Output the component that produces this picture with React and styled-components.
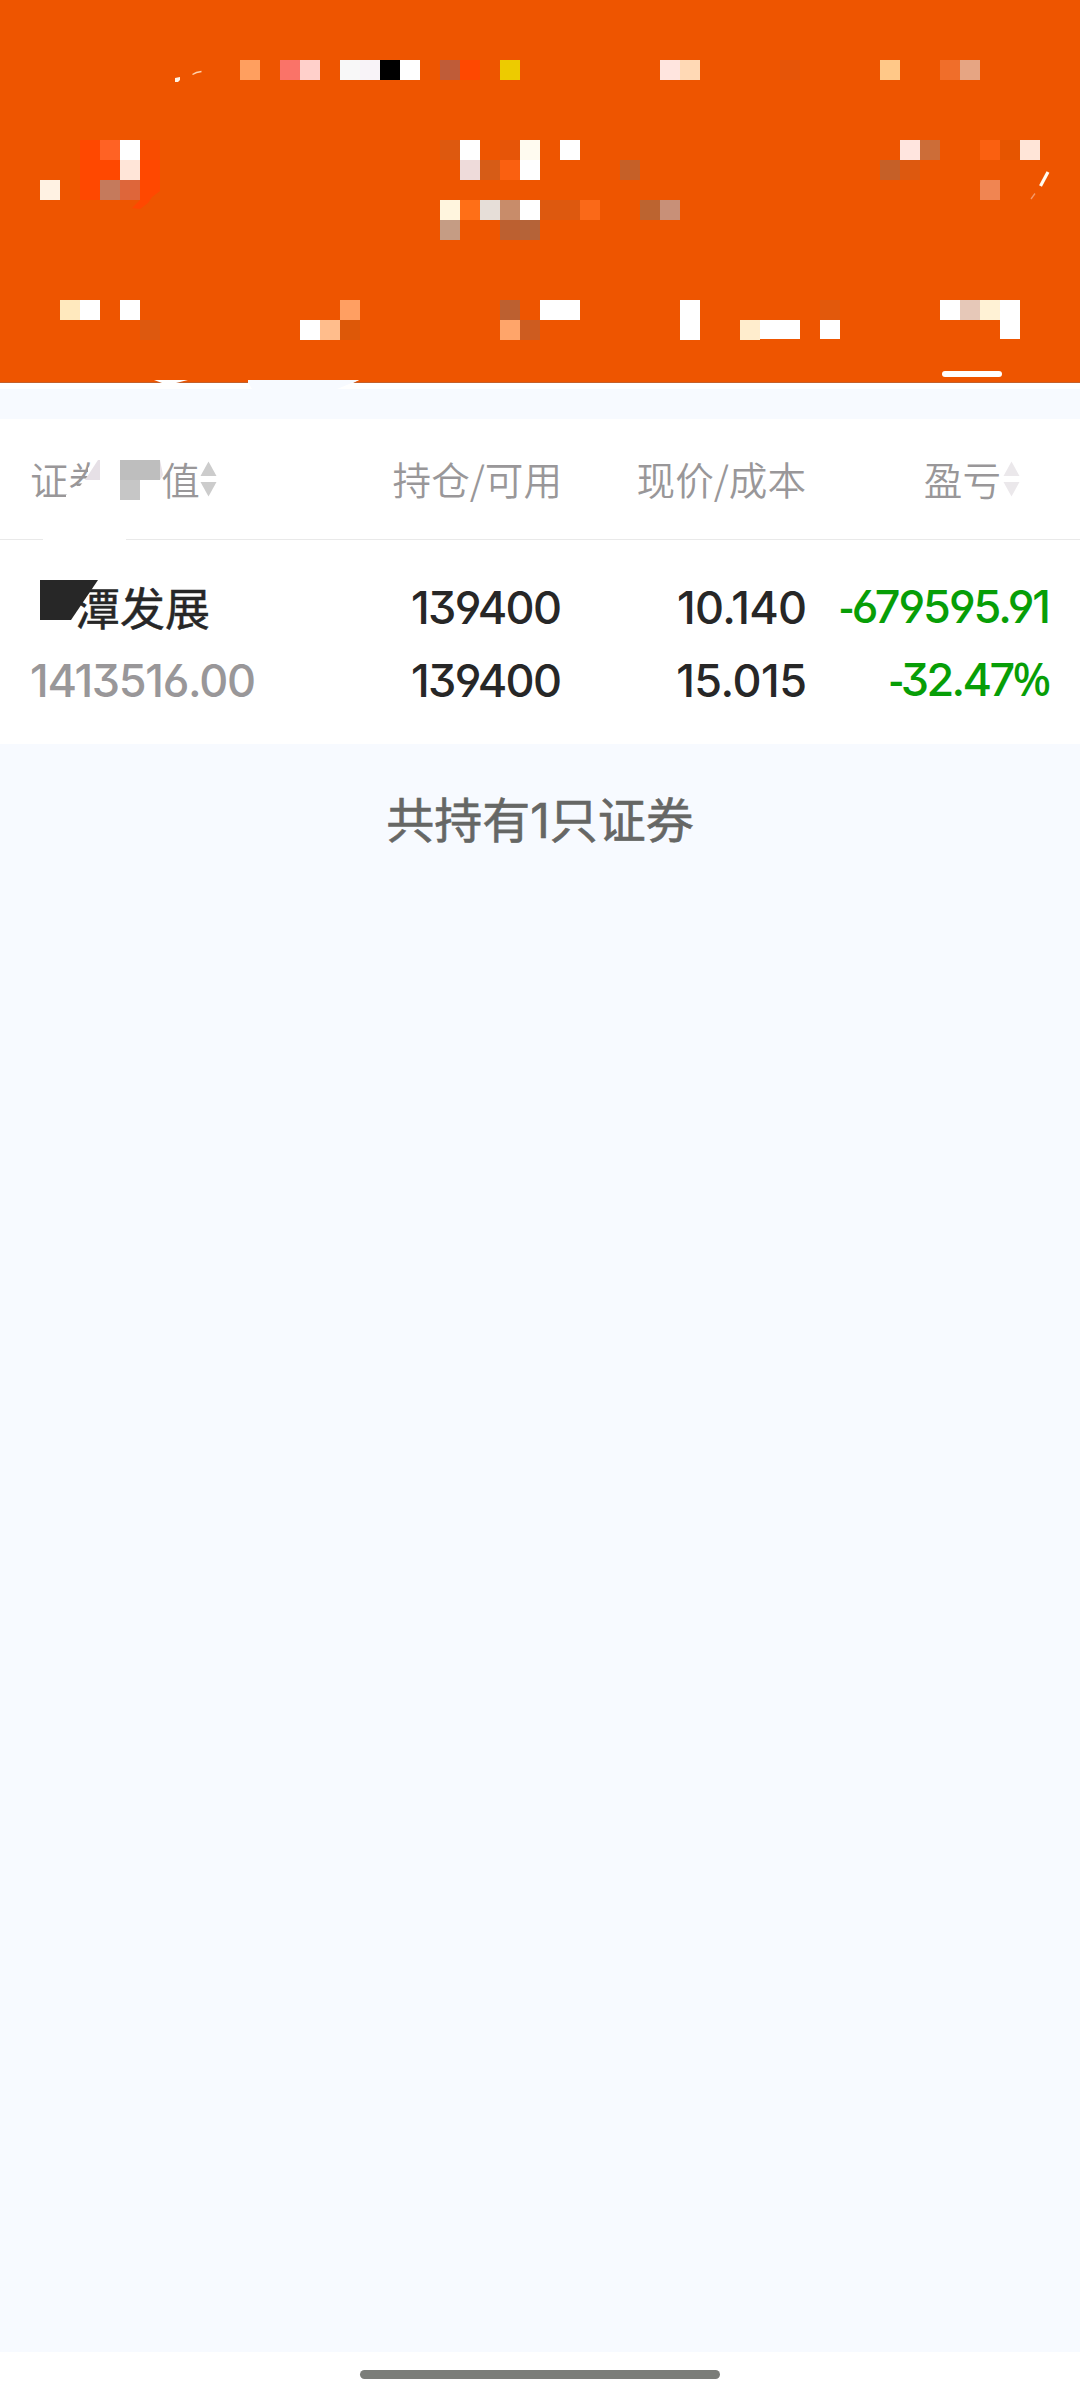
import React from 'react';
import styled, { createGlobalStyle } from 'styled-components';

const GlobalStyle = createGlobalStyle`
  * {
    box-sizing: border-box;
  }
  body {
    margin: 0;
    background-color: #f7faff;
    font-family: Inter, "Noto Sans CJK SC", sans-serif;
  }
`;

const Page = styled.div`
  width: 1080px;
  height: 2400px;
  display: flex;
  flex-direction: column;
  overflow: hidden;
`;

const Header = styled.header`
  height: 389px;
  flex: none;
  background-color: #ffffff;
`;

const HeaderArt = styled.svg`
  display: block;
`;

const Holdings = styled.section`
  margin-top: 30px;
  height: 325px;
  flex: none;
  background-color: #ffffff;
`;

const Row = styled.div`
  display: grid;
  grid-template-columns: 290px 242px 245px 244px;
  padding: 0 29px 0 30px;
`;

const TableHead = styled(Row)`
  position: relative;
  height: 120px;
  align-items: center;
`;

const HeadCell = styled.div`
  display: flex;
  align-items: center;
  justify-content: ${(p) => (p.$left ? 'flex-start' : 'flex-end')};
  padding-right: ${(p) => p.$end || '0'};
  padding-bottom: 3px;
  font-family: "Noto Sans CJK SC", sans-serif;
  font-size: 38.6px;
  font-weight: 350;
  line-height: 60px;
  color: #999799;
  white-space: nowrap;
`;

const CoverGap = styled.span`
  width: 54px;
`;

const Arrows = styled.svg`
  margin-top: 3px;
  margin-left: ${(p) => p.$gap || '0'};
`;

const Divider = styled.div`
  display: flex;
  justify-content: space-between;
  height: 1px;
`;

const Line = styled.span`
  width: ${(p) => p.$width};
  background-color: #e9e9e9;
`;

const TableRow = styled(Row)`
  position: relative;
  padding-top: 31px;
`;

const Cell = styled.div`
  display: flex;
  flex-direction: column;
  align-items: ${(p) => (p.$left ? 'flex-start' : 'flex-end')};
  margin-top: ${(p) => p.$lift || '0'};
`;

const Value = styled.span`
  height: 73px;
  line-height: 73px;
  font-size: 45px;
  font-weight: 450;
  font-feature-settings: "cv03", "cv04", "cv09";
  letter-spacing: -${(p) => p.$tight}px;
  margin-right: ${(p) => p.$tight}px;
  color: ${(p) => p.$color || '#272727'};
  white-space: nowrap;
`;

// narrower minus and percent signs
const Sign = styled.span`
  font-family: "Noto Sans", sans-serif;
  font-weight: 500;
  line-height: 1;
`;

const StockName = styled.span`
  height: 73px;
  line-height: 71px;
  padding-left: 45px;
  font-family: "Noto Sans CJK SC", sans-serif;
  font-size: 45px;
  font-weight: 400;
  -webkit-text-stroke: 0.5px #272727;
  color: #272727;
`;

const Cover = styled.svg`
  position: absolute;
  left: ${(p) => p.$left};
  top: ${(p) => p.$top};
`;

const Summary = styled.p`
  margin: 41px 0 0;
  text-align: center;
  font-size: 48px;
  line-height: 72px;
  font-weight: 400;
  -webkit-text-stroke: 0.6px #666765;
  color: #666765;
`;

const NavBar = styled.footer`
  display: flex;
  justify-content: center;
  height: 48px;
  margin-top: auto;
  padding-top: 18px;
  background-color: #ffffff;
`;

const NavHandle = styled.span`
  width: 360px;
  height: 9px;
  border-radius: 5px;
  background-color: #7b7d79;
`;

// x, y, colour, optional width and height
const blocks = [
  [240, 60, '#ff9f5f'], [280, 60, '#fa7368'], [300, 60, '#ffd0cb'],
  [340, 60, '#f8f8f8'], [360, 60, '#f8f3f8'], [380, 60, '#000000'],
  [400, 60, '#ffffff'], [440, 60, '#bf5c38'], [460, 60, '#ff4800'],
  [500, 60, '#edcb00'], [660, 60, '#ffe5df'], [680, 60, '#ffd9b5'],
  [780, 60, '#e65508'], [880, 60, '#ffc888'], [940, 60, '#f06e2a'],
  [960, 60, '#e6a583'],

  [80, 140, '#ff4800', 20, 60], [100, 140, '#ff6224'], [120, 140, '#ffffff'],
  [140, 140, '#f84c00'], [440, 140, '#dd590f'], [460, 140, '#ffffff'],
  [500, 140, '#e65508'], [520, 140, '#fffbf0'], [560, 140, '#ffffff'],
  [900, 140, '#ffe5df'], [920, 140, '#cc6d38'], [980, 140, '#fa6010'],
  [1000, 140, '#e65500'], [1020, 140, '#ffe5d8'],

  [100, 160, '#ff4800'], [120, 160, '#ffe5d8'], [140, 160, '#ff4800'],
  [460, 160, '#eedbda'], [480, 160, '#d65c17'], [500, 160, '#fa6010'],
  [520, 160, '#ffffff'], [620, 160, '#c56028'], [880, 160, '#c56028'],
  [900, 160, '#dd590f'],

  [40, 180, '#fff2e3'], [100, 180, '#c57a5c'], [120, 180, '#de663a'],
  [980, 180, '#f08552'],

  [440, 200, '#fff5de'], [460, 200, '#ff6f17'], [480, 200, '#e6ded8'],
  [500, 200, '#c88c6a'], [520, 200, '#ffffff'], [540, 200, '#dd590f', 40],
  [580, 200, '#fa6918'], [640, 200, '#bc6430'], [660, 200, '#c89078'],
  [440, 220, '#c59c84'], [500, 220, '#bc6030'], [520, 220, '#b56338'],

  [60, 300, '#ffe9be'], [80, 300, '#ffffff'], [120, 300, '#ffffff'],
  [340, 300, '#ff9f62'], [500, 300, '#bc6030'], [540, 300, '#ffffff', 40],
  [680, 300, '#ffffff', 20, 40], [820, 300, '#e2590c'], [940, 300, '#ffffff'],
  [960, 300, '#e6c8b8'], [980, 300, '#fff2d5'], [1000, 300, '#ffffff', 20, 39],

  [140, 320, '#dd590f'], [300, 320, '#ffffff'], [320, 320, '#ffbd8c'],
  [340, 320, '#dd5808'], [500, 320, '#ffa56a'], [520, 320, '#cd5c20'],
  [740, 320, '#ffedcd'], [760, 320, '#ffffff', 40, 19], [820, 320, '#ffffff', 20, 19],
];

function TopBar() {
  return (
    <Header>
      <HeaderArt width="1080" height="389" viewBox="0 0 1080 389">
        <rect width="1080" height="383" fill="#ee5500" />
        <rect y="382" width="1080" height="1" fill="#c4602a" />
        <g shapeRendering="crispEdges">
          {blocks.map(([x, y, fill, w = 20, h = 20]) => (
            <rect key={`${x}-${y}`} x={x} y={y} width={w} height={h} fill={fill} />
          ))}
        </g>
        <path d="M140 180H160V191L152 197L148 203L140 209L132 208L140 200Z" fill="#ff4800" />
        <path d="M175 78L180 77V80L178 82H175Z" fill="#fff2e3" />
        <path d="M192.500 74.500Q196 72 201.500 71.500" fill="none" stroke="#ffd2ad" strokeWidth="1.400" />
        <path d="M1040.500 186L1048 172" stroke="#fffbf0" strokeWidth="3.200" />
        <path d="M1031 199L1035 193.500" stroke="#f59a69" strokeWidth="1.300" />
        <rect x="942" y="371" width="60" height="6" rx="3" fill="#ffffff" />
        <path d="M154 380H188L176 383H162Z" fill="#ffffff" />
        <path d="M248 380H359L353 383V389H248Z" fill="#ffffff" />
        <path d="M248 380H359L337 389H252L248 382Z" fill="#f7faff" />
      </HeaderArt>
    </Header>
  );
}

function SortArrows({ color, gap }) {
  return (
    <Arrows $gap={gap} width="17" height="36" viewBox="0 0 17 36" fill={color}>
      <path d="M8.500 0.500L16.500 15H0.500Z" />
      <path d="M0.500 21H16.500L8.500 35.500Z" />
    </Arrows>
  );
}

function HoldingsTable() {
  return (
    <Holdings>
      <TableHead>
        <HeadCell $left>
          证券
          <CoverGap />
          值
          <SortArrows color="#cccccc" />
        </HeadCell>
        <HeadCell>持仓/可用</HeadCell>
        <HeadCell $end="1px">现价/成本</HeadCell>
        <HeadCell $end="31px">
          盈亏
          <SortArrows color="#ebe8eb" gap="2px" />
        </HeadCell>
        <Cover $left="66px" $top="36px" width="104" height="54" viewBox="66 455 104 54">
          <path d="M100 455L88 468V476L80 486L66 495V509H112V455Z" fill="#ffffff" />
          <path d="M98 460H100V480H85Z" fill="#e6e0e6" />
          <path d="M120 460H160V480H140V500H120Z" fill="#bebebe" />
          <path d="M120 480H140V500H120Z" fill="#c6c6c6" />
          <path d="M160 460L163 475L160 480Z" fill="#e6e0e6" />
        </Cover>
      </TableHead>
      <Divider>
        <Line $width="43px" />
        <Line $width="954px" />
      </Divider>
      <TableRow>
        <Cell $left>
          <StockName>潭发展</StockName>
          <Value $tight={1.3} $color="#999799">1413516.00</Value>
        </Cell>
        <Cell>
          <Value $tight={1.7}>139400</Value>
          <Value $tight={1.7}>139400</Value>
        </Cell>
        <Cell>
          <Value $tight={0.7}>10.140</Value>
          <Value $tight={0.5}>15.015</Value>
        </Cell>
        <Cell $lift="-1px">
          <Value $tight={2} $color="#079e07">
            <Sign>-</Sign>679595.91
          </Value>
          <Value $tight={2.6} $color="#079e07">
            <Sign>-</Sign>32.47<Sign>%</Sign>
          </Value>
        </Cell>
        <Cover $left="40px" $top="40px" width="60" height="40" viewBox="0 0 60 40">
          <path d="M0 0H58L31 40H0Z" fill="#272727" />
        </Cover>
      </TableRow>
    </Holdings>
  );
}

function App() {
  return (
    <>
      <GlobalStyle />
      <Page>
        <TopBar />
        <HoldingsTable />
        <Summary>共持有1只证券</Summary>
        <NavBar>
          <NavHandle />
        </NavBar>
      </Page>
    </>
  );
}

export default App;
